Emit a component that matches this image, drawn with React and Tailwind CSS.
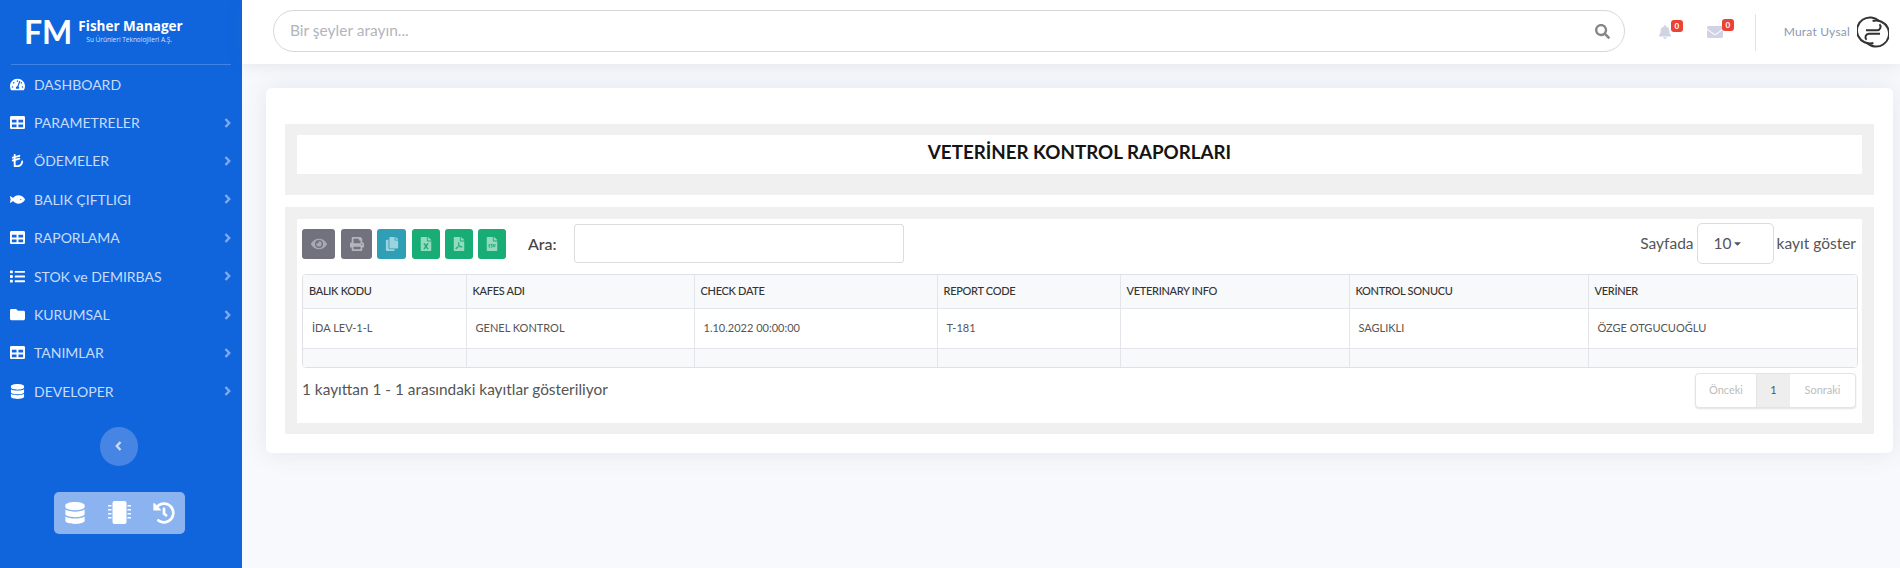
import React from "react";
import { FaTachometerAlt, FaTable, FaFish, FaList, FaFolder, FaDatabase, FaHistory, FaEye, FaPrint, FaCopy, FaFileExcel, FaFilePdf, FaFileCsv, FaBell, FaEnvelope, FaSearch, FaCaretDown } from "react-icons/fa";
import { FaTurkishLiraSign } from "react-icons/fa6";

const menu = [
  [FaTachometerAlt, "DASHBOARD", false],
  [FaTable, "PARAMETRELER", true],
  [FaTurkishLiraSign, "ÖDEMELER", true],
  [FaFish, "BALIK ÇIFTLIGI", true],
  [FaTable, "RAPORLAMA", true],
  [FaList, "STOK ve DEMIRBAS", true],
  [FaFolder, "KURUMSAL", true],
  [FaTable, "TANIMLAR", true],
  [FaDatabase, "DEVELOPER", true],
];

const cols = [
  ["w-[163px]", "BALIK KODU", "İDA LEV-1-L"],
  ["w-[228px]", "KAFES ADI", "GENEL KONTROL"],
  ["w-[243px]", "CHECK DATE", "1.10.2022 00:00:00"],
  ["w-[183px]", "REPORT CODE", "T-181"],
  ["w-[229px]", "VETERINARY INFO", ""],
  ["w-[239px]", "KONTROL SONUCU", "SAGLIKLI"],
  ["w-[271px]", "VERİNER", "ÖZGE OTGUCUOĞLU"],
];

const tools = [
  [FaEye, "mr-[6px] w-[33px] bg-[#72727f]", "text-[16px] text-[#a9a9b2]"],
  [FaPrint, "mr-[5px] w-[31px] bg-[#72727f]", "text-[14px] text-[#b4b4bc]"],
  [FaCopy, "mr-[6px] w-[29px] bg-[#2e9fb5]", "text-[14px] text-[#9dd3de]"],
  [FaFileExcel, "mr-[5px] w-[28px] bg-[#18ad75]", "text-[14px] text-[#93dabf]"],
  [FaFilePdf, "mr-[5px] w-[28px] bg-[#18ad75]", "text-[14px] text-[#93dabf]"],
  [FaFileCsv, "w-[28px] bg-[#18ad75]", "text-[14px] text-[#93dabf]"],
];

function Chevron({ left, className }) {
  return (
    <svg width="7" height="10" viewBox="0 0 7 10" fill="none" stroke="currentColor" strokeWidth="2.4" className={className}>
      <path d={left ? "M5.500 1 1.800 5l3.700 4" : "M1.500 1 5.200 5 1.500 9"} />
    </svg>
  );
}

function Chip() {
  return (
    <svg width="23" height="23" viewBox="0 0 23 23" fill="currentColor">
      <rect x="4.500" y="0" width="14" height="23" rx="2" />
      <path d="M0 4h3.500v1.400H0zM0 8h3.500v1.400H0zM0 12h3.500v1.400H0zM0 16h3.500v1.400H0zM19.500 4H23v1.400h-3.500zM19.500 8H23v1.400h-3.500zM19.500 12H23v1.400h-3.500zM19.500 16H23v1.400h-3.500z" />
    </svg>
  );
}

function Avatar() {
  return (
    <svg width="32" height="32" viewBox="0 0 32 32" fill="none" stroke="#333" strokeWidth="2">
      <path d="M22.200 5.300A13 13 0 1 0 16.400 27" />
      <path d="M9.800 26.700A13 13 0 1 0 15.600 5" />
      <path d="M9 14.200H20a3.500 3.500 0 0 0 2.500-6" />
      <path d="M23 17.800H12a3.500 3.500 0 0 0-2.500 6" />
    </svg>
  );
}

function Badge() {
  return (
    <span className="absolute -top-[5px] -right-[11px] flex h-[12px] w-[12px] items-center justify-center rounded-[3px] bg-[#ea4335] text-[8px] font-bold leading-none text-white">0</span>
  );
}

export default function App() {
  return (
    <div className="flex h-[568px] w-full overflow-hidden bg-[#f8f9fc] font-['Lato','Liberation_Sans',sans-serif]">
      <aside className="flex w-[242px] shrink-0 flex-col bg-[#1065dd]">
        <div className="mx-[11px] flex h-[65px] items-start border-b border-[#3f83e4] pl-[15px] pt-[15px] text-white">
          <span className="-ml-[2px] text-[32px] font-bold leading-[34px]">FM</span>
          <div className="ml-[6px] flex flex-col pt-[3px] font-['Open_Sans',sans-serif]">
            <span className="whitespace-nowrap text-[13.500px] font-bold leading-[16px]">Fisher Manager</span>
            <span className="mt-[1px] whitespace-nowrap pl-[8px] text-[6.500px] leading-[10px] text-[#d4e3fa]">Su Ürünleri Teknolojileri A.Ş.</span>
          </div>
        </div>
        <nav className="flex flex-col">
          {menu.map(([Icon, label, arrow]) => (
            <div key={label} className="flex h-[38.400px] items-center pl-[9px] pr-[11px]">
              <span className="flex w-[16px] justify-center text-[15px] text-white"><Icon /></span>
              <span className="ml-[9px] flex-1 text-[14px] text-[#c9dcf9]">{label}</span>
              {arrow && <Chevron className="text-[#7eaaee]" />}
            </div>
          ))}
        </nav>
        <div className="mt-[16px] flex justify-center pr-[5px]">
          <div className="flex h-[39px] w-[38px] items-center justify-center rounded-full bg-[#4785e5]">
            <Chevron left className="text-[#c9dcf9]" />
          </div>
        </div>
        <div className="mt-[26px] flex justify-center pr-[3px]">
          <div className="flex h-[42px] w-[131px] items-center justify-between rounded-[5px] bg-[#8ab3ef] px-[10px] text-[22px] text-white">
            <FaDatabase />
            <Chip />
            <FaHistory />
          </div>
        </div>
      </aside>

      <div className="flex min-w-0 flex-1 flex-col">
        <header className="relative z-10 flex h-[64px] shrink-0 items-center bg-white pl-[31px] pr-[11px] shadow-[0_2px_14px_rgba(90,90,130,0.12)]">
          <div className="mt-[-2px] flex h-[42px] w-[1353px] items-center justify-between rounded-full border border-[#d8d8d8] pl-[16px] pr-[14px]">
            <span className="text-[15.500px] text-[#b4b4bd]">Bir şeyler arayın...</span>
            <FaSearch className="text-[15px] text-[#868686]" />
          </div>
          <div className="relative ml-[33px] text-[14px] text-[#d0d3e4]"><FaBell /><Badge /></div>
          <div className="relative ml-[35px] text-[16px] text-[#d0d3e4]"><FaEnvelope /><Badge /></div>
          <div className="ml-[32px] h-[37px] w-px bg-[#dfe2ec]" />
          <span className="ml-[28px] whitespace-nowrap text-[12px] tracking-[0.2px] text-[#8a98b5]">Murat Uysal</span>
          <span className="ml-[7px]"><Avatar /></span>
        </header>

        <main className="pl-[24px] pr-[7px] pt-[24px]">
          <div className="rounded-[6px] bg-white px-[19px] pb-[19px] pt-[36px] shadow-[0_0_24px_rgba(90,90,130,0.12)]">
            <div className="bg-[#f0f0f0] px-[12px] pb-[21px] pt-[11px]">
              <div className="flex h-[39px] items-center justify-center bg-white pb-[4px] text-[18.750px] font-bold text-[#141414]">VETERİNER KONTROL RAPORLARI</div>
            </div>
            <div className="mt-[12px] bg-[#f0f0f0] px-[12px] pb-[11px] pt-[12px]">
              <div className="h-[204px] bg-white pl-[5px] pr-[4px] pt-[4px]">
                <div className="flex h-[41px] items-center">
                  {tools.map(([Icon, box, ic], i) => (
                    <span key={i} className={"flex h-[30px] items-center justify-center rounded-[3px] " + box + " " + ic}><Icon /></span>
                  ))}
                  <span className="ml-[22px] text-[16px] font-medium text-[#444]">Ara:</span>
                  <div className="ml-[17px] h-[39px] w-[330px] rounded-[3px] border border-[#dcdcdc] bg-white" />
                  <div className="ml-auto flex items-center text-[15.500px] text-[#555]">
                    <span>Sayfada</span>
                    <span className="mx-[3px] flex h-[41px] w-[77px] items-center justify-center rounded-[5px] border border-[#dcdcdc]">10<FaCaretDown className="mr-[14px] text-[11px]" /></span>
                    <span className="mr-[2px]">kayıt göster</span>
                  </div>
                </div>
                <div className="mt-[10px] overflow-hidden rounded-[4px] border border-[#dfe1e6]">
                  <table className="w-full table-fixed border-collapse text-[11px] text-[#555]">
                    <thead>
                      <tr className="h-[33px] bg-[#f8f9fb]">
                        {cols.map(([w, h], i) => (
                          <th key={i} className={w + " border-b border-l border-[#e3e5ea] pl-[6px] text-left font-medium tracking-[-0.3px] text-[#333] first:border-l-0"}>{h}</th>
                        ))}
                      </tr>
                    </thead>
                    <tbody>
                      <tr className="h-[40px]">
                        {cols.map(([w, , v], i) => (
                          <td key={i} className="border-b border-l border-[#e3e5ea] pl-[9px] first:border-l-0">{v}</td>
                        ))}
                      </tr>
                      <tr className="h-[19px] bg-[#f8f9fb]">
                        {cols.map(([w], i) => (
                          <td key={i} className="border-l border-[#e3e5ea] first:border-l-0" />
                        ))}
                      </tr>
                    </tbody>
                  </table>
                </div>
                <div className="mt-[5px] flex items-start justify-between pr-[2px]">
                  <span className="mt-[5px] text-[15.400px] text-[#555]">1 kayıttan 1 - 1 arasındaki kayıtlar gösteriliyor</span>
                  <div className="flex h-[35px] w-[161px] overflow-hidden rounded-[4px] border border-[#e4e4e4] bg-white text-[11px] text-[#bdbdbd] shadow-[0_1px_2px_rgba(0,0,0,0.12)]">
                    <span className="flex w-[61px] items-center justify-center border-r border-[#e4e4e4]">Önceki</span>
                    <span className="flex w-[33px] items-center justify-center bg-[#eeeeee] text-[#555]">1</span>
                    <span className="flex flex-1 items-center justify-center">Sonraki</span>
                  </div>
                </div>
              </div>
            </div>
          </div>
        </main>
      </div>
    </div>
  );
}
